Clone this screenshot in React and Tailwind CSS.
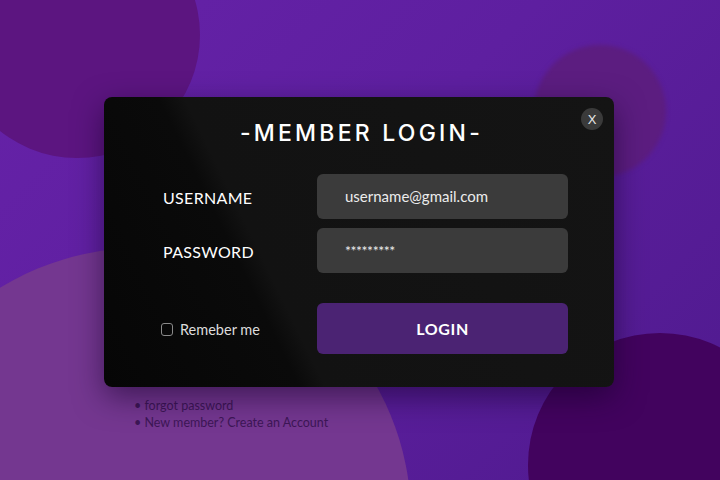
import React from "react";

export default function App() {
  return (
    <div className="relative w-[720px] h-[480px] overflow-hidden bg-[linear-gradient(135deg,#6622a8_0%,#5e1fa0_45%,#4f1a8e_100%)] font-['Lato',sans-serif]">
      {/* background blobs */}
      <div className="absolute left-[-46px] top-[-88px] w-[246px] h-[246px] rounded-full bg-[#5c1580]" />
      <div className="absolute left-[534px] top-[45px] w-[132px] h-[132px] rounded-full bg-[#5c1d80] blur-[2px]" />
      <div className="absolute left-[-129px] top-[248px] w-[540px] h-[540px] rounded-full bg-[#743790]" />
      <div className="absolute left-[528px] top-[333px] w-[264px] h-[264px] rounded-full bg-[#42035e]" />

      <div className="relative pt-[97px] pl-[104px]">
        <div className="relative w-[510px] h-[290px] rounded-lg bg-[linear-gradient(64deg,#060606_0%,#0a0a0a_30%,#121212_34%,#141414_100%)] shadow-[0_10px_30px_rgba(20,0,40,0.55)] pl-[59px] pr-[46px] pt-[22px]">
          <button className="absolute right-[11px] top-[11px] w-[22px] h-[22px] rounded-full bg-[#3a3a3a] text-[#e8e8e8] text-[13px] leading-none flex items-center justify-center font-['Liberation_Sans',sans-serif]">
            X
          </button>

          <h1 className="text-center text-white text-[23px] leading-[28px] tracking-[0.14em] font-medium font-['Inter',sans-serif] pl-[4px] pr-[12px]">
            -MEMBER LOGIN-
          </h1>

          <div className="mt-[27px] grid grid-cols-[154px_251px] gap-y-[9px]">
            <div className="flex items-center text-white text-[16px] tracking-[0.02em] pt-[3px]">USERNAME</div>
            <div className="h-[45px] rounded-md bg-[#3b3b3b] flex items-center pl-[28px] text-[#ececec] text-[15px]">
              username@gmail.com
            </div>
            <div className="flex items-center text-white text-[16px] tracking-[0.02em] pt-[3px]">PASSWORD</div>
            <div className="h-[45px] rounded-md bg-[#3b3b3b] flex items-center pl-[28px] text-[#ececec] text-[14px] tracking-[-0.03em]">
              *********
            </div>
          </div>

          <div className="mt-[30px] grid grid-cols-[154px_251px]">
            <label className="flex items-center gap-[7px] text-[#dcdcdc] text-[14.5px] -ml-[2px] pt-[2px]">
              <span className="w-[12px] h-[13px] rounded-[3px] border border-[#8a8a8a]" />
              Remeber me
            </label>
            <button className="h-[51px] rounded-md bg-[#4b2373] text-white text-[16px] font-bold tracking-[0.04em]">
              LOGIN
            </button>
          </div>
        </div>

        <ul className="mt-[10px] pl-[30px] text-[12.5px] leading-[17px] text-[#3d1656]">
          <li>• forgot password</li>
          <li>• New member? Create an Account</li>
        </ul>
      </div>
    </div>
  );
}
